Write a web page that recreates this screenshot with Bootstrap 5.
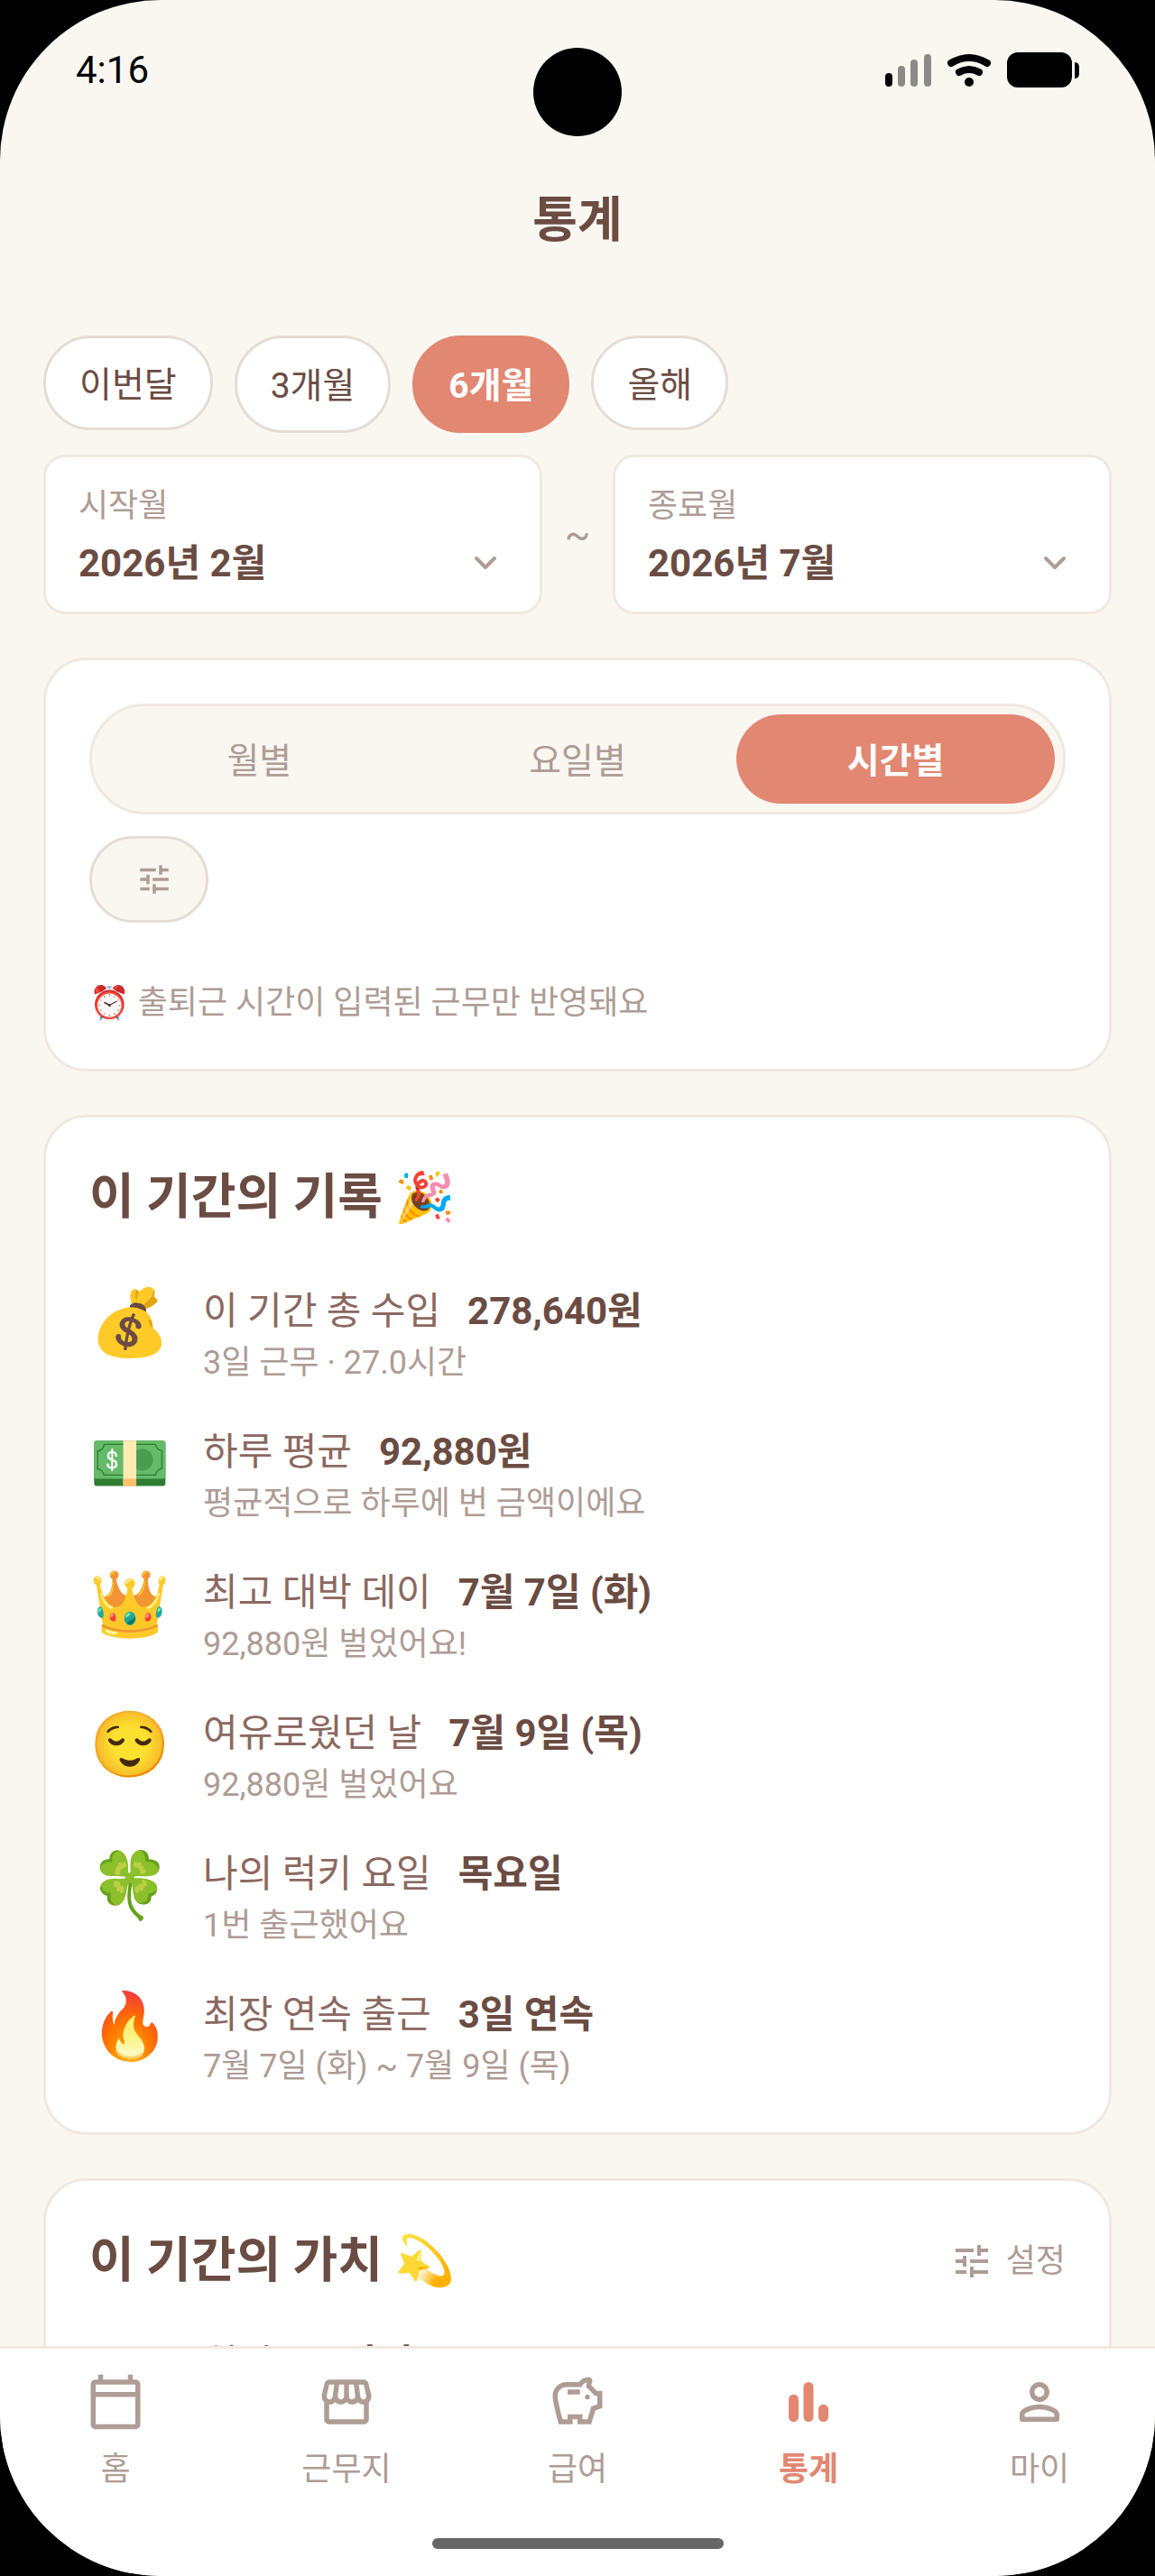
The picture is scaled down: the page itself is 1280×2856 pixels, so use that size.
<!DOCTYPE html>
<html lang="ko">
<head>
<meta charset="utf-8">
<meta name="viewport" content="width=device-width, initial-scale=1">
<title>통계</title>
<link rel="stylesheet" href="https://cdn.jsdelivr.net/npm/bootstrap@5.3.0/dist/css/bootstrap.min.css">
<style>
  :root { --cream:#faf7f0; --line:#f0e9e1; --line-strong:#e5dcd5; --coral:#e28772; --brown:#6b4c43; --brown-mid:#8b6860; --taupe:#ae9c95; }
  body { background:#000; color:var(--brown); font-family:Roboto,"Noto Sans CJK KR","Noto Color Emoji",sans-serif; font-size:42px; line-height:60px; }
  button { font-family:inherit; }
  .phone { height:100vh; background:var(--cream); border-radius:178px; }
  .status-bar { height:174px; padding:48px 84px 0; color:#000; }
  .camera-hole { width:98px; height:98px; left:50%; top:53px; margin-left:-49px; background:#000; border-radius:50%; }
  .app-title { height:138px; font-size:54px; line-height:142px; font-weight:700; }
  .screen { min-height:0; padding:60px 48px 0; }
  .chip { height:105px; padding:4px 37px 0; border:3px solid var(--line-strong); border-radius:54px; background:#fff; color:var(--brown); font-size:39px; line-height:54px; }
  .chip-tall { height:108px; }
  .chip-on { background:var(--coral); border-color:var(--coral); color:#fff; font-weight:700; }
  .chips { gap:24px; }
  .month-box { height:177px; padding:0 36px; border:3px solid var(--line); border-radius:24px; background:#fff; color:var(--brown); line-height:60px; }
  .month-label { font-size:36px; margin-bottom:4px; color:var(--taupe); }
  .month-box svg { color:var(--taupe); }
  .tilde { width:78px; color:var(--taupe); }
  .panel { padding:48px; border:3px solid var(--line); border-radius:48px; background:#fff; }
  .panel-top { margin-top:48px; }
  .segments { padding:9px; border:3px solid var(--line); border-radius:62px; background:var(--cream); }
  .segment { height:99px; padding:4px 0 0; border:0; border-radius:50px; background:transparent; color:var(--taupe); font-size:39px; }
  .segment-on { background:var(--coral); color:#fff; font-weight:700; }
  .filter-btn { margin-top:24px; width:132px; height:96px; padding:0 36px 0 48px; border:3px solid var(--line-strong); border-radius:48px; background:var(--cream); color:var(--taupe); }
  .hint { margin:60px 0 0; padding-top:4px; font-size:36px; line-height:50px; color:var(--taupe); }
  .heading { margin:0; font-size:54px; line-height:82px; font-weight:700; }
  .records { margin:53px 0 0; }
  .records-next { margin-top:41px; }
  .record { height:114px; }
  .record + .record { margin-top:42px; }
  .record-icon { width:126px; font-size:72px; line-height:90px; }
  .record-line { line-height:64px; }
  .record-name { color:var(--brown-mid); margin-right:30px; }
  .record-sub { font-size:36px; line-height:50px; color:var(--taupe); }
  .settings { border:0; background:transparent; padding:0; gap:14px; font-size:36px; color:var(--taupe); }
  .tabs { height:255px; padding-top:26px; border-top:3px solid var(--line); background:#fff; }
  .tab { color:var(--taupe); font-size:36px; line-height:54px; text-decoration:none; gap:15px; }
  .tab-on { color:var(--coral); font-weight:700; }
  .home-bar { width:323px; height:12px; bottom:30px; left:50%; margin-left:-161px; border-radius:6px; background:#666; }
  svg { display:block; fill:currentColor; flex:none; }
</style>
<script src="https://cdn.jsdelivr.net/npm/bootstrap@5.3.0/dist/js/bootstrap.bundle.min.js"></script>
</head>
<body>
<svg width="0" height="0" class="position-absolute" aria-hidden="true">
  <symbol id="tune" viewBox="0 0 24 24"><path d="M3 17v2h6v-2H3zM3 5v2h10V5H3zm10 16v-2h8v-2h-8v-2h-2v6h2zM7 9v2H3v2h4v2h2V9H7zm14 4v-2H11v2h10zm-6-4h2V7h4V5h-4V3h-2v6z"/></symbol>
  <symbol id="chevron" viewBox="0 0 24 24"><path d="M7 9l5 5 5-5" fill="none" stroke="currentColor" stroke-width="2" stroke-linecap="round" stroke-linejoin="round"/></symbol>
</svg>
<div class="phone position-relative overflow-hidden d-flex flex-column">
  <div class="status-bar d-flex justify-content-between flex-shrink-0">
    <span>4:16</span>
    <svg width="216" height="60" viewBox="0 0 216 60" aria-hidden="true">
      <rect x="1" y="33" width="8" height="15" rx="4"/>
      <g fill="#8c8a86"><rect x="15" y="25" width="8" height="23" rx="4"/><rect x="29" y="18" width="8" height="30" rx="4"/><rect x="44" y="12" width="8" height="36" rx="4"/></g>
      <g fill="none" stroke="#000" stroke-width="8" stroke-linecap="round"><path d="M74 22q20-12 40 0"/><path d="M83 32q11-6 22 0"/></g>
      <circle cx="94" cy="43" r="5"/>
      <rect x="136" y="10" width="72" height="39" rx="12"/><path d="M211 21q5 0 5 6v6q0 6-5 6z"/>
    </svg>
  </div>
  <div class="camera-hole position-absolute"></div>
  <h1 class="app-title text-center m-0 flex-shrink-0">통계</h1>
  <main class="screen flex-grow-1 overflow-hidden">
    <div class="chips d-flex align-items-start">
      <button type="button" class="chip">이번달</button>
      <button type="button" class="chip chip-tall">3개월</button>
      <button type="button" class="chip chip-tall chip-on">6개월</button>
      <button type="button" class="chip">올해</button>
    </div>
    <div class="d-flex align-items-center mt-4">
      <button type="button" class="month-box flex-fill text-start">
        <span class="month-label d-block">시작월</span>
        <span class="d-flex align-items-center justify-content-between"><b>2026년 2월</b><svg width="48" height="48"><use href="#chevron"/></svg></span>
      </button>
      <span class="tilde text-center">~</span>
      <button type="button" class="month-box flex-fill text-start">
        <span class="month-label d-block">종료월</span>
        <span class="d-flex align-items-center justify-content-between"><b>2026년 7월</b><svg width="48" height="48"><use href="#chevron"/></svg></span>
      </button>
    </div>
    <section class="panel panel-top">
      <div class="segments d-flex">
        <button type="button" class="segment col">월별</button>
        <button type="button" class="segment col">요일별</button>
        <button type="button" class="segment segment-on col">시간별</button>
      </div>
      <button type="button" class="filter-btn d-flex align-items-center" aria-label="필터"><svg width="42" height="42"><use href="#tune"/></svg></button>
      <p class="hint">⏰ 출퇴근 시간이 입력된 근무만 반영돼요</p>
    </section>
    <section class="panel panel-top">
      <h2 class="heading">이 기간의 기록 🎉</h2>
      <ul class="records list-unstyled">
        <li class="record d-flex"><span class="record-icon">💰</span><div><div class="record-line"><span class="record-name">이 기간 총 수입</span><b>278,640원</b></div><div class="record-sub">3일 근무 · 27.0시간</div></div></li>
        <li class="record d-flex"><span class="record-icon">💵</span><div><div class="record-line"><span class="record-name">하루 평균</span><b>92,880원</b></div><div class="record-sub">평균적으로 하루에 번 금액이에요</div></div></li>
        <li class="record d-flex"><span class="record-icon">👑</span><div><div class="record-line"><span class="record-name">최고 대박 데이</span><b>7월 7일 (화)</b></div><div class="record-sub">92,880원 벌었어요!</div></div></li>
        <li class="record d-flex"><span class="record-icon">😌</span><div><div class="record-line"><span class="record-name">여유로웠던 날</span><b>7월 9일 (목)</b></div><div class="record-sub">92,880원 벌었어요</div></div></li>
        <li class="record d-flex"><span class="record-icon">🍀</span><div><div class="record-line"><span class="record-name">나의 럭키 요일</span><b>목요일</b></div><div class="record-sub">1번 출근했어요</div></div></li>
        <li class="record d-flex"><span class="record-icon">🔥</span><div><div class="record-line"><span class="record-name">최장 연속 출근</span><b>3일 연속</b></div><div class="record-sub">7월 7일 (화) ~ 7월 9일 (목)</div></div></li>
      </ul>
    </section>
    <section class="panel panel-top">
      <div class="d-flex align-items-center justify-content-between">
        <h2 class="heading">이 기간의 가치 💫</h2>
        <button type="button" class="settings d-flex align-items-center"><svg width="48" height="48"><use href="#tune"/></svg>설정</button>
      </div>
      <ul class="records records-next list-unstyled">
        <li class="record d-flex"><span class="record-icon"></span><div class="record-line"><span class="record-name">치킨</span><b>13마리</b></div></li>
      </ul>
    </section>
  </main>
  <nav class="tabs d-flex flex-shrink-0" aria-label="메뉴">
    <a href="#" class="tab col d-flex flex-column align-items-center"><svg width="66" height="66" viewBox="0 0 24 24"><path d="M20 3h-1V1h-2v2H7V1H5v2H4c-1.1 0-2 .9-2 2v16c0 1.1.9 2 2 2h16c1.1 0 2-.9 2-2V5c0-1.1-.9-2-2-2zm0 18H4V10h16v11zm0-13H4V5h16v3z"/></svg>홈</a>
    <a href="#" class="tab col d-flex flex-column align-items-center"><svg width="66" height="66" viewBox="0 0 24 24"><path d="M21.9 8.89l-1.05-4.37c-.22-.9-1-1.52-1.91-1.52H5.05c-.9 0-1.69.63-1.9 1.52L2.1 8.89c-.24 1.02-.02 2.06.62 2.88.08.11.19.19.28.29V19c0 1.1.9 2 2 2h14c1.1 0 2-.9 2-2v-6.94c.09-.09.2-.18.28-.28.64-.82.87-1.87.62-2.89zm-2.99-3.9l1.05 4.37c.1.42.01.84-.25 1.17-.14.18-.44.47-.94.47-.61 0-1.14-.49-1.21-1.14L16.98 5l1.93-.01zM13 5h1.96l.54 4.52c.05.39-.07.78-.33 1.07-.22.26-.54.41-.95.41-.67 0-1.22-.59-1.22-1.31V5zM8.49 9.52L9.04 5H11v4.69c0 .72-.55 1.31-1.29 1.31-.34 0-.65-.15-.89-.41-.25-.29-.37-.68-.33-1.07zm-4.45-.16L5.05 5h1.97l-.58 4.86c-.08.65-.6 1.14-1.21 1.14-.49 0-.8-.29-.93-.47-.27-.32-.36-.75-.26-1.17zM5 19v-6.03c.08.01.15.03.23.03.87 0 1.66-.36 2.24-.95.6.6 1.4.95 2.31.95.87 0 1.65-.36 2.23-.93.59.57 1.39.93 2.29.93.84 0 1.64-.35 2.24-.95.58.59 1.37.95 2.24.95.08 0 .15-.02.23-.03V19H5z"/></svg>근무지</a>
    <a href="#" class="tab col d-flex flex-column align-items-center"><svg width="66" height="66" viewBox="0 0 24 24"><path d="M15 10c0-.55.45-1 1-1s1 .45 1 1-.45 1-1 1-1-.45-1-1zM8 9h5V7H8v2zm14-1.5v6.97l-2.82.94L17.5 21H12v-2h-2v2H4.5S2 12.54 2 9.5 4.46 4 7.5 4h5c.91-1.21 2.36-2 4-2 .83 0 1.5.67 1.5 1.5 0 .21-.04.4-.12.58-.14.34-.26.73-.32 1.15l2.27 2.27H22zm-2 2h-1L15.5 6c0-.65.09-1.29.26-1.91-.97.25-1.76.97-2.09 1.91H7.5C5.57 6 4 7.57 4 9.5c0 1.88 1.22 6.65 2.01 9.5H8v-2h6v2h2.01l1.55-5.15 2.44-.82V9.5z"/></svg>급여</a>
    <a href="#" class="tab tab-on col d-flex flex-column align-items-center" aria-current="page"><svg width="66" height="66" viewBox="0 0 24 24"><rect x="4" y="9" width="4" height="11" rx="2"/><rect x="10" y="4" width="4" height="16" rx="2"/><rect x="16" y="13" width="4" height="7" rx="2"/></svg>통계</a>
    <a href="#" class="tab col d-flex flex-column align-items-center"><svg width="66" height="66" viewBox="0 0 24 24"><path d="M12 6c1.1 0 2 .9 2 2s-.9 2-2 2-2-.9-2-2 .9-2 2-2m0 9c2.7 0 5.8 1.29 6 2v1H6v-1c.2-.71 3.3-2 6-2m0-11C9.79 4 8 5.79 8 8s1.79 4 4 4 4-1.79 4-4-1.79-4-4-4zm0 9c-2.67 0-8 1.34-8 4v2c0 .55.45 1 1 1h14c.55 0 1-.45 1-1v-2c0-2.66-5.33-4-8-4z"/></svg>마이</a>
  </nav>
  <div class="home-bar position-absolute"></div>
</div>
</body>
</html>
